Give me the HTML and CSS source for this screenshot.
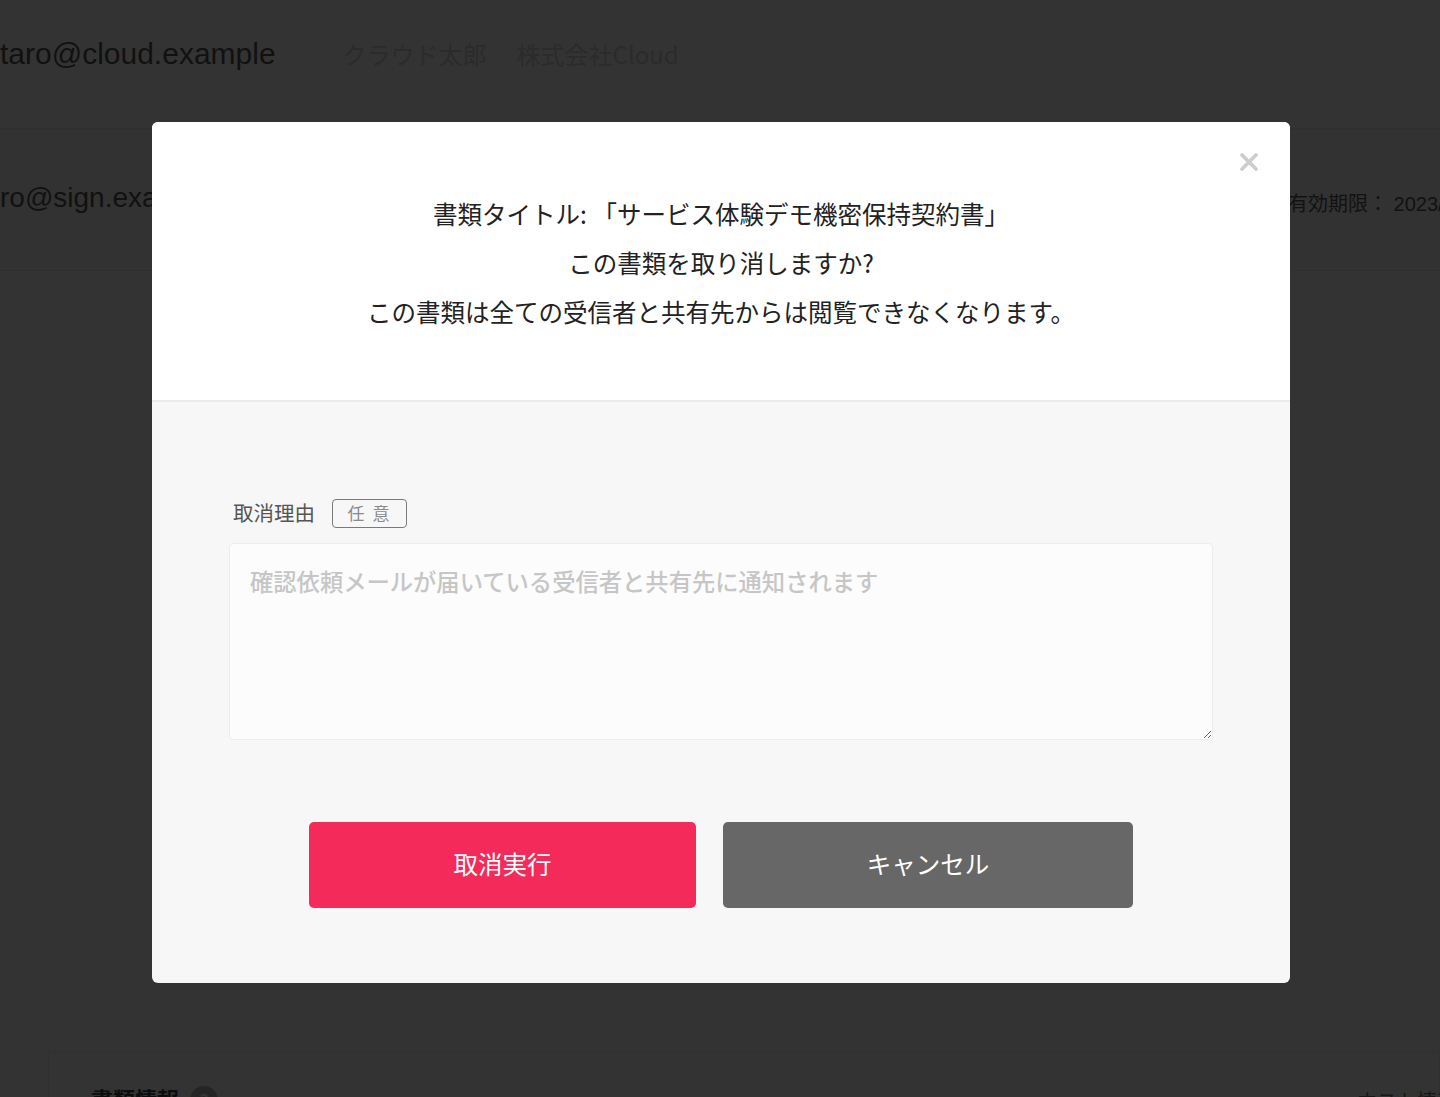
FILE: index.html
```html
<!DOCTYPE html>
<html lang="ja">
<head>
  <meta charset="utf-8">
  <title>書類の取り消し</title>
  <link rel="stylesheet" href="styles.css">
</head>
<body>
  <div class="page">
    <div class="account-row">
      <span class="account-email">taro@cloud.example</span>
      <span class="account-name">クラウド太郎</span>
      <span class="account-name">株式会社Cloud</span>
    </div>
    <div class="account-row second">
      <span class="account-email small">ro@sign.example</span>
      <span class="expiry">有効期限： 2023/04/30</span>
    </div>
    <div class="doc-card">
      <h3 class="doc-title">書類情報 <span class="help-dot">?</span></h3>
      <span class="doc-host">ホスト情報</span>
    </div>
  </div>

  <div class="overlay">
    <div class="modal">
      <button class="modal-close" type="button">
        <svg width="18" height="18" viewBox="0 0 18 18">
          <path d="M2 2 L16 16 M16 2 L2 16" stroke="#cccccc" stroke-width="3.6" stroke-linecap="round"/>
        </svg>
      </button>
      <div class="modal-head">
        <p>書類タイトル: 「サービス体験デモ機密保持契約書」</p>
        <p>この書類を取り消しますか?</p>
        <p>この書類は全ての受信者と共有先からは閲覧できなくなります。</p>
      </div>
      <div class="modal-body">
        <div class="field-label">
          <label for="reason">取消理由</label>
          <span class="optional">任 意</span>
        </div>
        <textarea id="reason" placeholder="確認依頼メールが届いている受信者と共有先に通知されます"></textarea>
        <div class="actions">
          <button class="btn btn-danger" type="button">取消実行</button>
          <button class="btn btn-cancel" type="button">キャンセル</button>
        </div>
      </div>
    </div>
  </div>
</body>
</html>
```

FILE: styles.css
```css
body {
  margin: 0;
  background-color: #FFFFFF;
  font-family: "Liberation Sans", "Noto Sans CJK JP", sans-serif;
  color: #555555;
  overflow: hidden;
}

.page {
  height: 1097px;
  overflow: hidden;
}

.account-row {
  display: flex;
  align-items: flex-start;
  box-sizing: border-box;
  height: 129px;
  padding-top: 37px;
  border-bottom: 1px solid #EAEAEA;
}

.account-row.second {
  height: 142px;
  padding-top: 53px;
  background-color: #F8F8F8;
  justify-content: space-between;
}

.account-email {
  font-size: 30px;
  color: #585858;
  margin-right: 67px;
}

.account-email.small {
  font-size: 28px;
}

.account-name {
  font-family: "Noto Sans CJK JP", sans-serif;
  font-size: 24px;
  line-height: 34px;
  color: #D4D4D4;
  margin-right: 30px;
}

.expiry {
  width: 152px;
  margin-top: 6px;
  white-space: nowrap;
  overflow: hidden;
  font-size: 20px;
  color: #5A5A5A;
}

.doc-card {
  display: flex;
  justify-content: space-between;
  margin: 780px 0 0 48px;
  padding: 30px 0 0 42px;
  background-color: #FCFCFC;
  border: 1px solid #F0F0F0;
  height: 200px;
}

.doc-title {
  margin: 0;
  font-family: "Noto Sans CJK JP", sans-serif;
  font-size: 22px;
  color: #444444;
}

.help-dot {
  display: inline-block;
  width: 28px;
  height: 28px;
  margin-left: 6px;
  border-radius: 50%;
  background-color: #BBBBBB;
  color: #FFFFFF;
  text-align: center;
  font-size: 18px;
  line-height: 28px;
}

.doc-host {
  flex-shrink: 0;
  margin: 4px -18px 0 0;
  white-space: nowrap;
  font-family: "Noto Sans CJK JP", sans-serif;
  font-size: 20px;
  color: #777777;
}

/* modal */
.overlay {
  position: fixed;
  top: 0;
  left: 0;
  right: 0;
  bottom: 0;
  background-color: rgba(0, 0, 0, 0.8);
  display: flex;
  justify-content: center;
  align-items: flex-start;
  padding: 122px 0 0 2px;
}

.modal {
  position: relative;
  width: 1138px;
  height: 861px;
  background-color: #F7F7F7;
  border-radius: 6px;
  overflow: hidden;
  font-family: "Noto Sans CJK JP", sans-serif;
}

.modal-close {
  position: absolute;
  top: 31px;
  right: 32px;
  padding: 0;
  border: none;
  background: none;
  line-height: 0;
  cursor: pointer;
}

.modal-head {
  background-color: #FFFFFF;
  border-bottom: 2px solid #EBEBEB;
  padding: 67px 0 64px;
  text-align: center;
}

.modal-head p {
  margin: 0;
  font-size: 24.5px;
  line-height: 49px;
  color: #222222;
}

.modal-body {
  padding: 97px 77px 0;
}

.field-label {
  display: flex;
  align-items: center;
  margin-bottom: 15px;
  padding-left: 4px;
}

.field-label label {
  font-size: 20.5px;
  line-height: 28px;
  color: #555555;
  margin-right: 17px;
  margin-top: -3px;
}

.optional {
  display: inline-block;
  box-sizing: border-box;
  width: 75px;
  height: 29px;
  border: 1.5px solid #7A7A7A;
  border-radius: 4px;
  text-align: center;
  font-size: 17px;
  line-height: 26px;
  color: #8A8A8A;
  letter-spacing: 2px;
}

textarea {
  display: block;
  box-sizing: border-box;
  width: 984px;
  height: 197px;
  padding: 18px 20px;
  border: 1px solid #ECECEC;
  border-radius: 4px;
  background-color: #FCFCFC;
  font-family: "Noto Sans CJK JP", sans-serif;
  font-size: 23.3px;
  line-height: 38px;
  color: #333333;
  resize: vertical;
}

textarea::placeholder {
  color: #C6C6C6;
  font-weight: 500;
}

.actions {
  display: flex;
  justify-content: center;
  gap: 27px;
  margin-top: 82px;
}

.btn {
  height: 86px;
  padding: 0 0 4px;
  border: none;
  border-radius: 5px;
  color: #FFFFFF;
  font-family: "Noto Sans CJK JP", sans-serif;
  font-size: 24.5px;
  cursor: pointer;
}

.btn-danger {
  width: 387px;
  background-color: #F32A5A;
}

.btn-cancel {
  width: 410px;
  background-color: #676767;
}
```
